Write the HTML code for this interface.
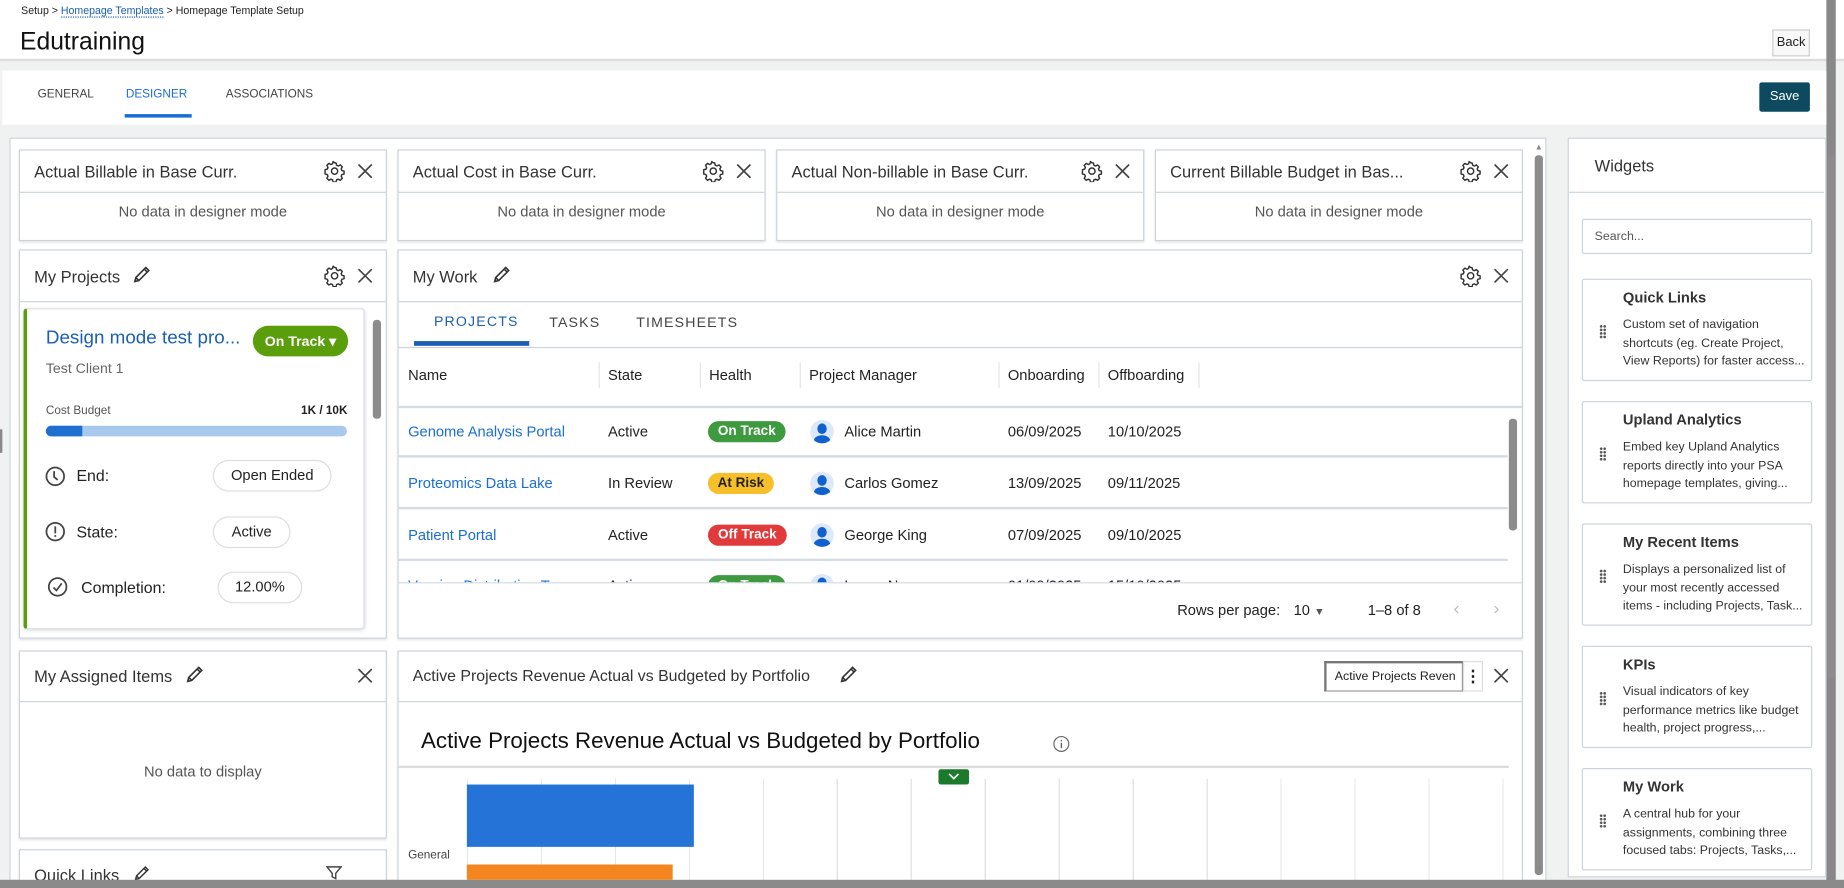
<!DOCTYPE html>
<html><head><meta charset="utf-8"><style>
*{box-sizing:border-box;margin:0;padding:0}
html,body{width:1844px;height:888px;overflow:hidden;background:#fff}
#w{position:absolute;left:0;top:0;width:1568px;height:755px;overflow:hidden;transform:scale(1.17602,1.1762);transform-origin:0 0;font-family:"Liberation Sans",sans-serif;color:#222;background:#f0f1f1}
.a{position:absolute}
.card{position:absolute;background:#fff;border:1px solid #ccd3db;box-shadow:0 1px 2px rgba(0,0,0,.12)}
.hd{position:absolute;left:0;right:0;top:0;border-bottom:1px solid #ccd3db}
.ht{position:absolute;left:12px;font-size:14px;color:#333}
.nd{position:absolute;left:0;right:0;text-align:center;font-size:12.5px;color:#555}
.t{white-space:nowrap}
.pill{position:absolute;border:1px solid #ddd;border-radius:14px;font-size:12.5px;text-align:center;color:#222}
.badge{position:absolute;height:18px;border-radius:9px;font-size:11.5px;font-weight:bold;color:#fff;text-align:center;line-height:18px}
.av{position:absolute;width:20px;height:20px;border-radius:50%;background:#dde8f8;overflow:hidden}
.av:before{content:"";position:absolute;left:6px;top:3px;width:8px;height:9px;border-radius:50%;background:#1060d0}
.av:after{content:"";position:absolute;left:3px;top:13px;width:14px;height:10px;border-radius:50% 50% 0 0;background:#1060d0}
.wc{position:absolute;left:1345px;width:196px;height:87px;background:#fff;border:1px solid #ccd3db;border-radius:2px}
.wc b{position:absolute;left:34px;top:8px;font-size:12.5px;color:#333}
.wc p{position:absolute;left:34px;top:31px;width:158px;font-size:10.5px;line-height:15.5px;color:#333}
.wc i{position:absolute;left:14px;top:38px;width:6px;height:12px;background:radial-gradient(circle,#555 1px,transparent 1.3px) 0 0/3px 3px}
</style></head><body><div id="w">
<!-- header -->
<div class="a" style="left:0;top:0;width:1568px;height:52px;background:#fff;border-bottom:2px solid #dcdcdc"></div>
<div class="a t" style="left:18px;top:4px;font-size:9px">Setup &gt; <span style="color:#1a5fb4;border-bottom:1px dotted #1a5fb4">Homepage Templates</span> &gt; Homepage Template Setup</div>
<div class="a t" style="left:17px;top:24px;font-size:21px;color:#111">Edutraining</div>
<div class="a" style="left:1507px;top:25px;width:32px;height:23px;border:1px solid #ccc;background:#f8f8f8;font-size:11px;text-align:center;line-height:21px">Back</div>
<div class="a" style="left:1553px;top:0;width:8px;height:755px;background:#888"></div>
<!-- tabs bar -->
<div class="a" style="left:2px;top:60px;width:1551px;height:46px;background:#fff"></div>
<div class="a t" style="left:32px;top:75px;font-size:10px;color:#444">GENERAL</div>
<div class="a t" style="left:107px;top:75px;font-size:10px;color:#1a6ed6">DESIGNER</div>
<div class="a" style="left:106px;top:97px;width:57px;height:3px;background:#1a6ed6"></div>
<div class="a t" style="left:192px;top:75px;font-size:10px;color:#444">ASSOCIATIONS</div>
<div class="a" style="left:1496px;top:70px;width:43px;height:25px;background:#0e4a5f;color:#fff;font-size:11px;text-align:center;line-height:25px;border-radius:2px">Save</div>
<!-- main panel -->
<div class="a" style="left:8px;top:117px;width:1307px;height:632px;background:#fff;border:1px solid #ccd3db"></div>
<div class="a" style="left:1305px;top:132px;width:7px;height:612px;background:#8c8c8c;border-radius:3px"></div>
<div class="a" style="left:1305px;top:122px;font-size:7px;color:#888">▲</div>
<div class="a" style="left:1305px;top:736px;font-size:7px;color:#888">▼</div>

<!-- row1 -->
<div class="card" style="left:16px;top:127px;width:313px;height:78px"><div class="hd" style="height:36px"></div><div class="ht t" style="top:10px">Actual Billable in Base Curr.</div><div class="nd" style="top:45px">No data in designer mode</div></div>
<div class="card" style="left:338px;top:127px;width:313px;height:78px"><div class="hd" style="height:36px"></div><div class="ht t" style="top:10px">Actual Cost in Base Curr.</div><div class="nd" style="top:45px">No data in designer mode</div></div>
<div class="card" style="left:660px;top:127px;width:313px;height:78px"><div class="hd" style="height:36px"></div><div class="ht t" style="top:10px">Actual Non-billable in Base Curr.</div><div class="nd" style="top:45px">No data in designer mode</div></div>
<div class="card" style="left:982px;top:127px;width:313px;height:78px"><div class="hd" style="height:36px"></div><div class="ht t" style="top:10px">Current Billable Budget in Bas...</div><div class="nd" style="top:45px">No data in designer mode</div></div>

<!-- My Projects -->
<div class="card" style="left:16px;top:212px;width:313px;height:331px"><div class="hd" style="height:44px"></div><div class="ht t" style="top:14px">My Projects</div></div>
<div class="a" style="left:20px;top:262px;width:290px;height:273px;background:#fff;border:1px solid #d8dde3;border-left:3px solid #5a9e0c;border-radius:3px;box-shadow:0 1px 3px rgba(0,0,0,.15)"></div>
<div class="a" style="left:317px;top:272px;width:7px;height:84px;background:#8c8c8c;border-radius:3px"></div>
<div class="a t" style="left:39px;top:279px;font-size:16px;color:#1a5fb4">Design mode test pro...</div>
<div class="a t" style="left:215px;top:277px;width:81px;height:26px;border-radius:13px;background:#5a9e0c;color:#fff;font-weight:bold;font-size:12px;line-height:26px;text-align:center">On Track ▾</div>
<div class="a t" style="left:39px;top:306px;font-size:12px;color:#666">Test Client 1</div>
<div class="a t" style="left:39px;top:344px;font-size:10px;color:#555">Cost Budget</div>
<div class="a t" style="left:256px;top:344px;font-size:10px;font-weight:bold">1K / 10K</div>
<div class="a" style="left:39px;top:362px;width:256px;height:9px;border-radius:5px;background:#a8c8ec"></div>
<div class="a" style="left:39px;top:362px;width:31px;height:9px;border-radius:5px 0 0 5px;background:#1f6fd0"></div>
<svg class="a" style="left:38px;top:396px" width="18" height="18" viewBox="0 0 18 18"><circle cx="9" cy="9" r="7.5" fill="none" stroke="#444" stroke-width="1.5"/><path d="M8 4.5V9.5L11 12" fill="none" stroke="#444" stroke-width="1.5"/></svg>
<div class="a t" style="left:65px;top:397px;font-size:13.5px">End:</div>
<div class="pill t" style="left:181px;top:391px;width:101px;height:27px;line-height:25px">Open Ended</div>
<svg class="a" style="left:38px;top:443px" width="18" height="18" viewBox="0 0 18 18"><circle cx="9" cy="9" r="7.5" fill="none" stroke="#444" stroke-width="1.5"/><path d="M9 4.5V10.5M9 12v1.5" fill="none" stroke="#444" stroke-width="1.5"/></svg>
<div class="a t" style="left:65px;top:445px;font-size:13.5px">State:</div>
<div class="pill t" style="left:181px;top:439px;width:66px;height:27px;line-height:25px">Active</div>
<svg class="a" style="left:40px;top:490px" width="18" height="18" viewBox="0 0 18 18"><circle cx="9" cy="9" r="7.5" fill="none" stroke="#444" stroke-width="1.5"/><path d="M5.5 9.5L8 12L12.5 6" fill="none" stroke="#444" stroke-width="1.5"/></svg>
<div class="a t" style="left:69px;top:492px;font-size:13.5px">Completion:</div>
<div class="pill t" style="left:185px;top:486px;width:72px;height:27px;line-height:25px">12.00%</div>

<!-- My Work -->
<div class="card" style="left:338px;top:212px;width:957px;height:331px"><div class="hd" style="height:44px"></div><div class="ht t" style="top:14px">My Work</div>
<div class="a" style="left:0;right:0;top:82px;border-top:1px solid #ccd3db"></div>
<div class="a" style="left:0;right:0;top:132px;border-top:2px solid #d5dbe2"></div>
</div>
<div class="a t" style="left:369px;top:266px;font-size:12px;letter-spacing:1px;color:#1a5fb4">PROJECTS</div>
<div class="a t" style="left:467px;top:267px;font-size:12px;letter-spacing:1px;color:#444">TASKS</div>
<div class="a t" style="left:541px;top:267px;font-size:12px;letter-spacing:1px;color:#444">TIMESHEETS</div>
<div class="a" style="left:352px;top:290px;width:98px;height:4px;background:#1a5fb4"></div>
<div class="a t" style="left:347px;top:312px;font-size:12.5px">Name</div>
<div class="a" style="left:509px;top:308px;width:1px;height:22px;background:#e4e4e4"></div>
<div class="a t" style="left:517px;top:312px;font-size:12.5px">State</div>
<div class="a" style="left:595px;top:308px;width:1px;height:22px;background:#e4e4e4"></div>
<div class="a t" style="left:603px;top:312px;font-size:12.5px">Health</div>
<div class="a" style="left:680px;top:308px;width:1px;height:22px;background:#e4e4e4"></div>
<div class="a t" style="left:688px;top:312px;font-size:12.5px">Project Manager</div>
<div class="a" style="left:849px;top:308px;width:1px;height:22px;background:#e4e4e4"></div>
<div class="a t" style="left:857px;top:312px;font-size:12.5px">Onboarding</div>
<div class="a" style="left:934px;top:308px;width:1px;height:22px;background:#e4e4e4"></div>
<div class="a t" style="left:942px;top:312px;font-size:12.5px">Offboarding</div>
<div class="a" style="left:1019px;top:308px;width:1px;height:22px;background:#e4e4e4"></div>

<div class="a" style="left:339px;top:387px;width:943px;height:2px;background:#d5dbe2"></div>
<div class="a" style="left:339px;top:431px;width:943px;height:2px;background:#d5dbe2"></div>
<div class="a" style="left:339px;top:475px;width:943px;height:2px;background:#d5dbe2"></div>
<div class="a" style="left:339px;top:495px;width:955px;height:1px;background:#d5dbe2"></div>
<div class="a" style="left:1283px;top:356px;width:7px;height:95px;background:#8c8c8c;border-radius:3px"></div>

<div class="a t" style="left:347px;top:360px;font-size:12.5px;color:#1a6ed6">Genome Analysis Portal</div>
<div class="a t" style="left:517px;top:360px;font-size:12.5px">Active</div>
<div class="badge" style="left:602px;top:358px;width:66px;background:#3e9a3e">On Track</div>
<div class="av" style="left:689px;top:357px"></div>
<div class="a t" style="left:718px;top:360px;font-size:12.5px">Alice Martin</div>
<div class="a t" style="left:857px;top:360px;font-size:12.5px">06/09/2025</div>
<div class="a t" style="left:942px;top:360px;font-size:12.5px">10/10/2025</div>

<div class="a t" style="left:347px;top:404px;font-size:12.5px;color:#1a6ed6">Proteomics Data Lake</div>
<div class="a t" style="left:517px;top:404px;font-size:12.5px">In Review</div>
<div class="badge" style="left:602px;top:402px;width:56px;background:#f7c02a;color:#222">At Risk</div>
<div class="av" style="left:689px;top:401px"></div>
<div class="a t" style="left:718px;top:404px;font-size:12.5px">Carlos Gomez</div>
<div class="a t" style="left:857px;top:404px;font-size:12.5px">13/09/2025</div>
<div class="a t" style="left:942px;top:404px;font-size:12.5px">09/11/2025</div>

<div class="a t" style="left:347px;top:448px;font-size:12.5px;color:#1a6ed6">Patient Portal</div>
<div class="a t" style="left:517px;top:448px;font-size:12.5px">Active</div>
<div class="badge" style="left:602px;top:446px;width:67px;background:#e03a3a">Off Track</div>
<div class="av" style="left:689px;top:445px"></div>
<div class="a t" style="left:718px;top:448px;font-size:12.5px">George King</div>
<div class="a t" style="left:857px;top:448px;font-size:12.5px">07/09/2025</div>
<div class="a t" style="left:942px;top:448px;font-size:12.5px">09/10/2025</div>

<div class="a" style="left:339px;top:477px;width:943px;height:18px;overflow:hidden">
<div class="a t" style="left:8px;top:14px;font-size:12.5px;color:#1a6ed6">Vaccine Distribution Tr...</div>
<div class="a t" style="left:178px;top:14px;font-size:12.5px">Active</div>
<div class="badge" style="left:263px;top:12px;width:66px;background:#3e9a3e">On Track</div>
<div class="av" style="left:350px;top:11px"></div>
<div class="a t" style="left:379px;top:14px;font-size:12.5px">Lucas Nguyen</div>
<div class="a t" style="left:518px;top:14px;font-size:12.5px">01/09/2025</div>
<div class="a t" style="left:603px;top:14px;font-size:12.5px">15/10/2025</div>
</div>

<div class="a t" style="left:1001px;top:512px;font-size:12.5px">Rows per page:</div>
<div class="a t" style="left:1100px;top:512px;font-size:12.5px">10 <span style="font-size:9px;color:#555">▼</span></div>
<div class="a t" style="left:1163px;top:512px;font-size:12.5px">1–8 of 8</div>
<div class="a t" style="left:1236px;top:509px;font-size:15px;color:#bbb">‹</div>
<div class="a t" style="left:1270px;top:509px;font-size:15px;color:#bbb">›</div>

<!-- My Assigned -->
<div class="card" style="left:16px;top:553px;width:313px;height:160px"><div class="hd" style="height:43px"></div><div class="ht t" style="top:13px">My Assigned Items</div><div class="nd" style="top:95px">No data to display</div></div>
<div class="card" style="left:16px;top:722px;width:313px;height:40px"><div class="ht t" style="top:13px">Quick Links</div></div>
<svg class="a" style="left:277px;top:735px" width="14" height="14" viewBox="0 0 14 14"><path d="M1 2h12L8.5 7.5V12L5.5 10.5V7.5z" fill="none" stroke="#444" stroke-width="1.2"/></svg>

<!-- Chart -->
<div class="card" style="left:338px;top:553px;width:957px;height:210px"><div class="hd" style="height:43px"></div><div class="ht t" style="top:13px;font-size:13.5px">Active Projects Revenue Actual vs Budgeted by Portfolio</div></div>
<div class="a t" style="left:1126px;top:562px;width:118px;height:26px;border:1px solid #999;border-left:2px solid #777;border-top:2px solid #777;font-size:10.5px;line-height:23px;padding-left:7px;overflow:hidden">Active Projects Reven</div>
<div class="a" style="left:1244px;top:562px;width:17px;height:26px;border:1px solid #ddd;font-size:14px;font-weight:bold;text-align:center;line-height:24px">⋮</div>
<div class="a t" style="left:358px;top:620px;font-size:19px;color:#111">Active Projects Revenue Actual vs Budgeted by Portfolio</div>
<svg class="a" style="left:895px;top:625px" width="15" height="15" viewBox="0 0 15 15"><circle cx="7.5" cy="7.5" r="6.3" fill="none" stroke="#666" stroke-width="1"/><path d="M7.5 6.5v4.5M7.5 4v1.3" stroke="#666" stroke-width="1.2"/></svg>
<div class="a" style="left:339px;top:651px;width:944px;height:2px;background:#dcdcdc"></div>
<div class="a" style="left:798px;top:654px;width:26px;height:13px;background:#1c7a2c;border-radius:2px"></div>
<svg class="a" style="left:805px;top:656px" width="12" height="9" viewBox="0 0 12 9"><path d="M2 2L6 6L10 2" fill="none" stroke="#fff" stroke-width="1.4"/></svg>
<div class="a" style="left:397px;top:662px;width:890px;height:86px;background:repeating-linear-gradient(90deg,#e6e6e6 0 1px,transparent 1px 62.9px)"></div>
<div class="a" style="left:397px;top:667px;width:193px;height:53px;background:#2673d8"></div>
<div class="a" style="left:397px;top:735px;width:175px;height:13px;background:#f5861f"></div>
<div class="a t" style="left:347px;top:722px;font-size:10px;color:#444">General</div>

<!-- icons -->
<svg width="0" height="0" style="position:absolute"><defs>
<symbol id="g" viewBox="0 0 20 20"><path d="M10 2.5l1.3.2.5 2 1.5.7 1.8-1 1.8 1.8-1 1.8.6 1.5 2 .5v2.6l-2 .5-.6 1.5 1 1.8-1.8 1.8-1.8-1-1.5.6-.5 2H8.7l-.5-2-1.5-.6-1.8 1-1.8-1.8 1-1.8-.6-1.5-2-.5V8.7l2-.5.6-1.5-1-1.8 1.8-1.8 1.8 1 1.5-.7.5-2z" fill="none" stroke="#333" stroke-width="1.3" stroke-linejoin="round"/><circle cx="10" cy="10" r="2.8" fill="none" stroke="#333" stroke-width="1.3"/></symbol>
<symbol id="x" viewBox="0 0 16 16"><path d="M2 2L14 14M14 2L2 14" stroke="#444" stroke-width="1.5"/></symbol>
<symbol id="p" viewBox="0 0 16 16"><path d="M2.5 13.5l.8-3.2 8-8 2.4 2.4-8 8zM10 3.5l2.4 2.4M3.3 10.3l2.4 2.4" fill="none" stroke="#333" stroke-width="1.3"/></symbol>
</defs></svg>
<svg class="a" style="left:275px;top:136px" width="19" height="19"><use href="#g"/></svg><svg class="a" style="left:303px;top:138px" width="15" height="15"><use href="#x"/></svg>
<svg class="a" style="left:597px;top:136px" width="19" height="19"><use href="#g"/></svg><svg class="a" style="left:625px;top:138px" width="15" height="15"><use href="#x"/></svg>
<svg class="a" style="left:919px;top:136px" width="19" height="19"><use href="#g"/></svg><svg class="a" style="left:947px;top:138px" width="15" height="15"><use href="#x"/></svg>
<svg class="a" style="left:1241px;top:136px" width="19" height="19"><use href="#g"/></svg><svg class="a" style="left:1269px;top:138px" width="15" height="15"><use href="#x"/></svg>
<svg class="a" style="left:275px;top:225px" width="19" height="19"><use href="#g"/></svg><svg class="a" style="left:303px;top:227px" width="15" height="15"><use href="#x"/></svg>
<svg class="a" style="left:1241px;top:225px" width="19" height="19"><use href="#g"/></svg><svg class="a" style="left:1269px;top:227px" width="15" height="15"><use href="#x"/></svg>
<svg class="a" style="left:303px;top:567px" width="15" height="15"><use href="#x"/></svg>
<svg class="a" style="left:1269px;top:567px" width="15" height="15"><use href="#x"/></svg>
<svg class="a" style="left:112px;top:225px" width="17" height="17"><use href="#p"/></svg>
<svg class="a" style="left:418px;top:225px" width="17" height="17"><use href="#p"/></svg>
<svg class="a" style="left:157px;top:565px" width="17" height="17"><use href="#p"/></svg>
<svg class="a" style="left:713px;top:565px" width="17" height="17"><use href="#p"/></svg>
<svg class="a" style="left:113px;top:735px" width="15" height="15"><use href="#p"/></svg>

<!-- widgets panel -->
<div class="a" style="left:1333px;top:117px;width:220px;height:629px;background:#fff;border:1px solid #ccd3db"></div>
<div class="a t" style="left:1356px;top:133px;font-size:14px;color:#333">Widgets</div>
<div class="a" style="left:1334px;top:163px;width:217px;height:1px;background:#ccd3db"></div>
<div class="a t" style="left:1345px;top:186px;width:196px;height:30px;border:1px solid #ccd3db;border-radius:2px;font-size:10.5px;line-height:28px;padding-left:10px;color:#555">Search...</div>
<div class="wc" style="top:237px"><b>Quick Links</b><i></i><p>Custom set of navigation shortcuts (eg. Create Project, View Reports) for faster access...</p></div>
<div class="wc" style="top:341px"><b>Upland Analytics</b><i></i><p>Embed key Upland Analytics reports directly into your PSA homepage templates, giving...</p></div>
<div class="wc" style="top:445px"><b>My Recent Items</b><i></i><p>Displays a personalized list of your most recently accessed items - including Projects, Task...</p></div>
<div class="wc" style="top:549px"><b>KPIs</b><i></i><p>Visual indicators of key performance metrics like budget health, project progress,...</p></div>
<div class="wc" style="top:653px"><b>My Work</b><i></i><p>A central hub for your assignments, combining three focused tabs: Projects, Tasks,...</p></div>
<div class="a" style="left:1554px;top:132px;width:6px;height:445px;background:#8c8c8c;border-radius:3px"></div>
<div class="a" style="left:0;top:748px;width:1568px;height:7px;background:#8a8a8a"></div>
<div class="a" style="left:0;top:365px;width:2px;height:20px;background:#888"></div>
</div></body></html>
